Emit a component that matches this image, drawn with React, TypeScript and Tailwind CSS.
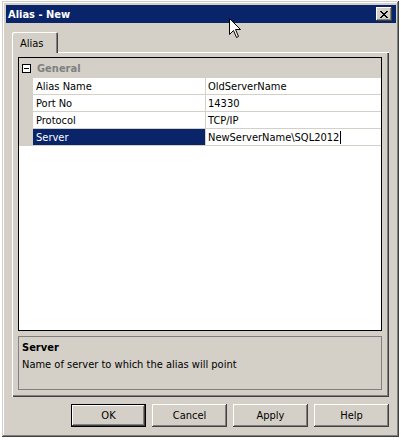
import React from 'react';

const font = { fontFamily: '"DejaVu Sans Condensed", "Liberation Sans", sans-serif' };

type Row = { name: string; value: string; selected?: boolean };

const rows: Row[] = [
  { name: 'Alias Name', value: 'OldServerName' },
  { name: 'Port No', value: '14330' },
  { name: 'Protocol', value: 'TCP/IP' },
  { name: 'Server', value: 'NewServerName\\SQL2012', selected: true },
];

const Button = ({ label, primary }: { label: string; primary?: boolean }) => (
  <div
    className={
      'w-[75px] h-[23px] flex items-center justify-center text-[11px] text-black bg-[#d4d0c8] ' +
      (primary
        ? 'border border-black shadow-[inset_-1px_-1px_0_#404040,inset_1px_1px_0_#fff,inset_-2px_-2px_0_#808080]'
        : 'shadow-[inset_-1px_-1px_0_#404040,inset_1px_1px_0_#fff,inset_-2px_-2px_0_#808080]')
    }
  >
    {label}
  </div>
);

export default function App() {
  return (
    <div className="w-[401px] h-[440px] bg-white pt-[1px] pl-[2px] text-[11px] leading-none" style={font}>
      <div className="relative w-[397px] h-[436px] bg-[#d4d0c8] flex flex-col pl-[4px] pt-[4px] pr-[3px] pb-[3px] shadow-[inset_-1px_-1px_0_#404040,inset_1px_1px_0_#d4d0c8,inset_-2px_-2px_0_#808080,inset_2px_2px_0_#fff]">
        {/* title bar */}
        <div className="h-[18px] bg-[#0a246a] flex items-center justify-between pl-[2px] pr-[4px]">
          <span className="text-white font-bold text-[11px]">Alias - New</span>
          <div className="w-[16px] h-[14px] bg-[#d4d0c8] flex items-center justify-center shadow-[inset_-1px_-1px_0_#404040,inset_1px_1px_0_#fff,inset_-2px_-2px_0_#808080]">
            <svg width="8" height="7" viewBox="0 0 8 7" shapeRendering="crispEdges">
              <path d="M0 0h2v1h-2zM6 0h2v1h-2zM1 1h2v1h-2zM5 1h2v1h-2zM2 2h4v1h-4zM3 3h2v1h-2zM2 4h4v1h-4zM1 5h2v1h-2zM5 5h2v1h-2zM0 6h2v1h-2zM6 6h2v1h-2z" fill="#000" />
            </svg>
          </div>
        </div>

        <div className="flex flex-col pl-[6px] pt-[9px]">
          {/* tab */}
          <div className="flex">
            <div className="relative z-10 w-[46px] h-[21px] -mb-[1px] bg-[#d4d0c8] pl-[8px] pt-[6px] rounded-tl-[2px] rounded-tr-[2px] shadow-[inset_1px_1px_0_#fff,inset_-1px_0_0_#404040,inset_-2px_0_0_#808080]">
              Alias
            </div>
          </div>

          {/* panel */}
          <div className="w-[377px] h-[345px] flex flex-col pl-[6px] pt-[5px] shadow-[inset_1px_1px_0_#fff,inset_-1px_-1px_0_#404040,inset_-2px_-2px_0_#808080]">
            {/* property grid */}
            <div className="w-[364px] h-[274px] border border-black bg-white flex flex-col">
              <div className="h-[20px] bg-[#d4d0c8] flex items-center">
                <div className="w-[14px] flex justify-center">
                  <div className="w-[9px] h-[9px] border border-black bg-white flex items-center justify-center">
                    <div className="w-[5px] h-[1px] bg-black" />
                  </div>
                </div>
                <span className="pl-[4px] font-bold text-[#808080]">General</span>
              </div>
              {rows.map((r) => (
                <div key={r.name} className="h-[17px] flex">
                  <div className="w-[14px] bg-[#d4d0c8]" />
                  <div
                    className={
                      'w-[173px] flex items-center pl-[3px] border-b border-r border-[#d4d0c8] ' +
                      (r.selected ? 'bg-[#0a246a] text-white' : 'text-black')
                    }
                  >
                    {r.name}
                  </div>
                  <div className="flex-1 flex items-center pl-[2px] border-b border-[#d4d0c8] text-black">
                    {r.value}
                    {r.selected && <span className="ml-[1px] w-[1px] h-[13px] bg-black" />}
                  </div>
                </div>
              ))}
            </div>

            {/* description */}
            <div className="mt-[5px] w-[364px] h-[54px] border border-[#808080] px-[3px] pt-[5px] flex flex-col gap-[6px]">
              <span className="font-bold">Server</span>
              <span>Name of server to which the alias will point</span>
            </div>
          </div>

          {/* buttons */}
          <div className="w-[377px] flex justify-end gap-[6px] mt-[7px]">
            <Button label="OK" primary />
            <Button label="Cancel" />
            <Button label="Apply" />
            <Button label="Help" />
          </div>
        </div>

        {/* mouse pointer */}
        <svg className="absolute left-[227px] top-[17px]" width="13" height="21" viewBox="0 0 13 21" shapeRendering="crispEdges">
          <path
            d="M0.5 0.5 L0.5 16.5 L4.5 12.5 L7.5 19.5 L9.5 18.5 L6.5 11.5 L11.5 11.5 Z"
            fill="#fff"
            stroke="#000"
            strokeWidth="1"
            shapeRendering="geometricPrecision"
          />
        </svg>
      </div>
    </div>
  );
}
